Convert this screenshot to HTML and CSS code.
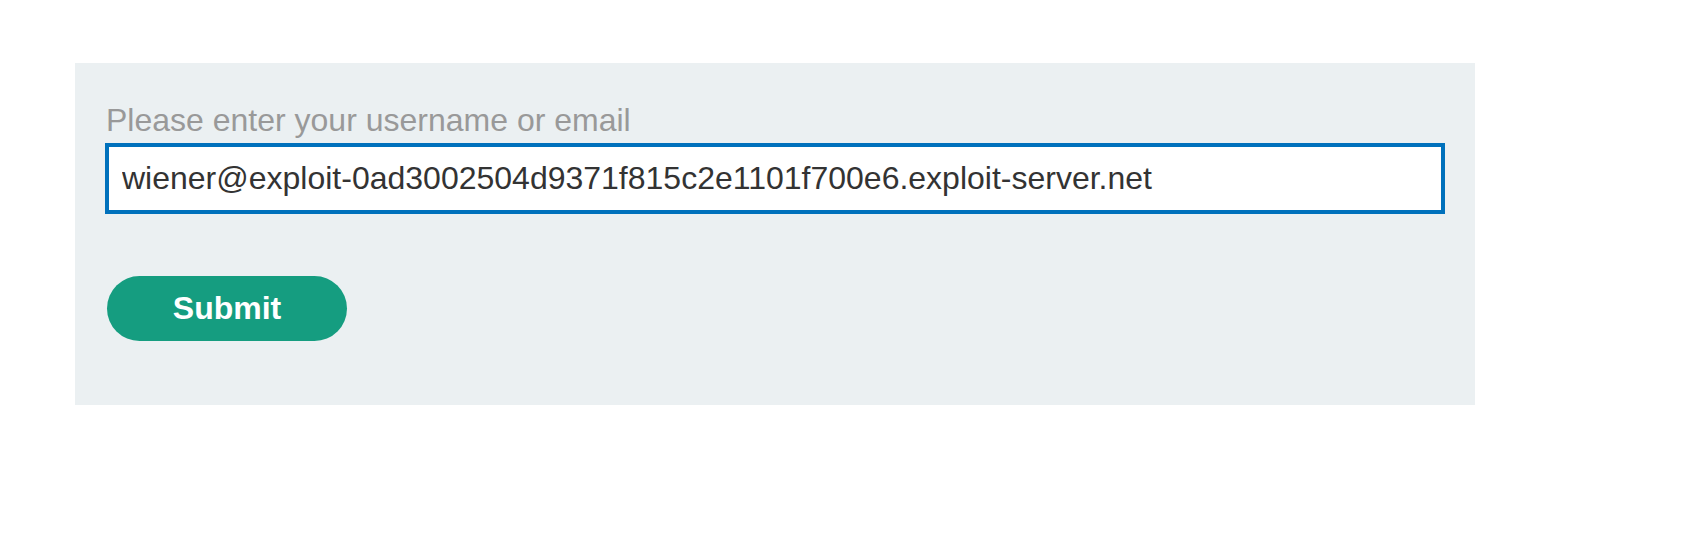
FILE: index.html
```html
<!DOCTYPE html>
<html>
<head>
<meta charset="utf-8">
<link rel="stylesheet" href="styles.css">
</head>
<body>
<form class="panel">
  <label class="label" for="user">Please enter your username or email</label>
  <input class="field" id="user" type="text" value="wiener@exploit-0ad3002504d9371f815c2e1101f700e6.exploit-server.net">
  <button class="submit" type="button">Submit</button>
</form>
</body>
</html>
```
FILE: styles.css
```css
html, body {
  margin: 0;
  padding: 0;
  background: #ffffff;
}
body {
  padding: 63px 0 0 75px;
  font-family: "Liberation Sans", Arial, sans-serif;
}
.panel {
  box-sizing: border-box;
  width: 1400px;
  height: 342px;
  margin: 0;
  background: #ebf0f2;
  padding: 39px 30px 64px 30px;
  display: flex;
  flex-direction: column;
  align-items: flex-start;
}
.label {
  font-size: 32px;
  line-height: 37px;
  color: #999999;
  margin-left: 1px;
}
.field {
  box-sizing: border-box;
  width: 1340px;
  height: 71px;
  margin: 4px 0 0 0;
  border: 4px solid #0071bc;
  outline: none;
  background: #ffffff;
  padding: 0 13px;
  font-family: "Liberation Sans", Arial, sans-serif;
  font-size: 32px;
  color: #333333;
}
.submit {
  box-sizing: border-box;
  width: 240px;
  height: 65px;
  margin: 62px 0 0 2px;
  border: none;
  border-radius: 33px;
  background: #159d80;
  color: #ffffff;
  font-family: "Liberation Sans", Arial, sans-serif;
  font-weight: bold;
  font-size: 32px;
  padding: 0;
}
```
